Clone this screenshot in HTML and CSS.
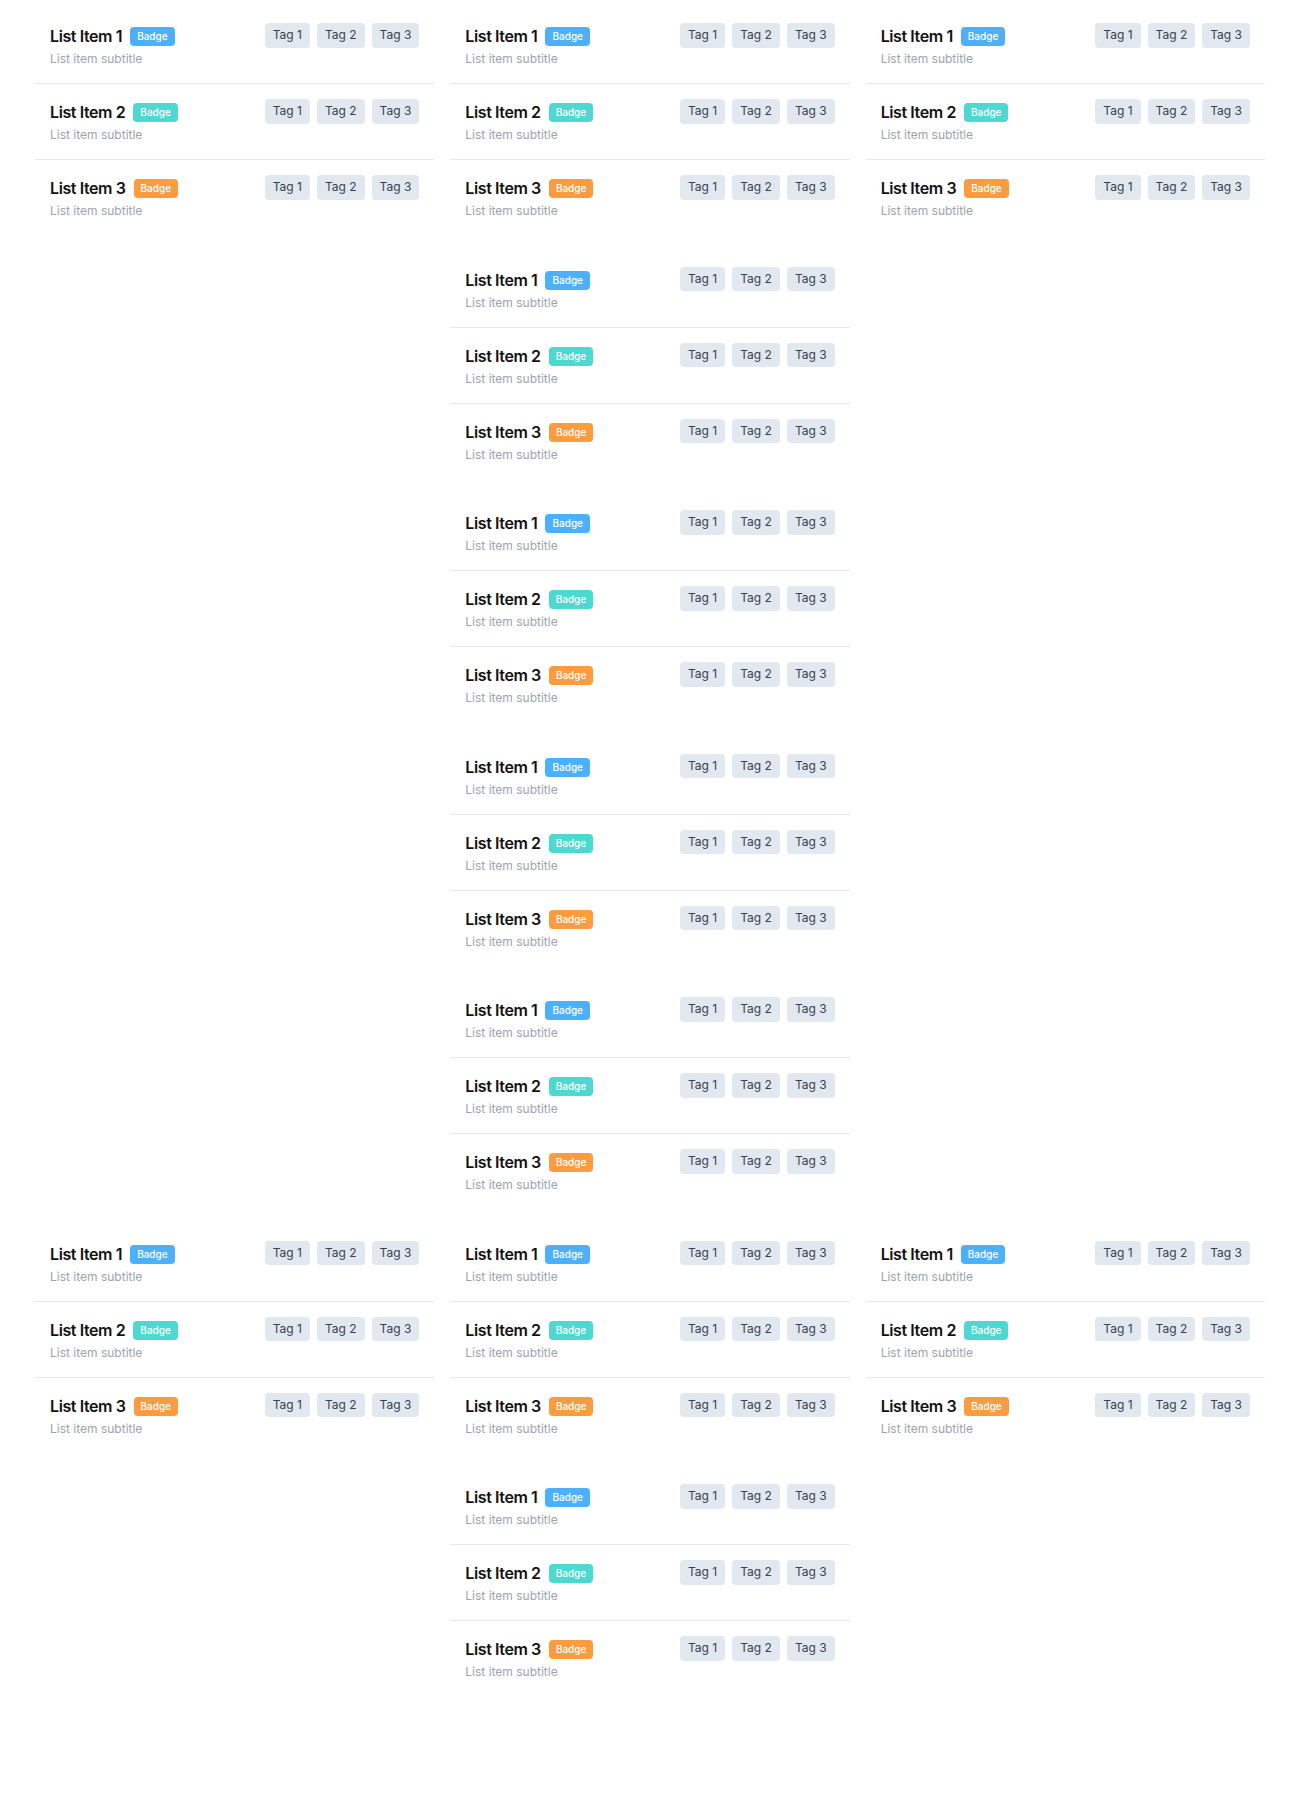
FILE: index.html
```html
<!DOCTYPE html>
<html lang="en">
<head>
<meta charset="utf-8">
<title>Lists</title>
<link rel="stylesheet" href="styles.css">
</head>
<body>
<div id="root"></div>
<script>
(function () {
  var cells = [1, 5, 1, 1, 2, 1];
  var badges = ['badge-blue', 'badge-teal', 'badge-orange'];
  var grid = document.createElement('div');
  grid.className = 'grid';
  cells.forEach(function (n) {
    var cell = document.createElement('div');
    cell.className = 'cell';
    for (var g = 0; g < n; g++) {
      var list = document.createElement('ul');
      list.className = 'list';
      for (var i = 0; i < 3; i++) {
        var li = document.createElement('li');
        li.className = 'item';
        li.innerHTML =
          '<div class="item-main">' +
            '<div class="item-head">' +
              '<span class="item-title">List Item ' + (i + 1) + '</span>' +
              '<span class="badge ' + badges[i] + '">Badge</span>' +
            '</div>' +
            '<div class="item-sub">List item subtitle</div>' +
          '</div>' +
          '<div class="tags">' +
            '<span class="tag">Tag 1</span>' +
            '<span class="tag">Tag 2</span>' +
            '<span class="tag">Tag 3</span>' +
          '</div>';
        list.appendChild(li);
      }
      cell.appendChild(list);
    }
    grid.appendChild(cell);
  });
  document.getElementById('root').appendChild(grid);
})();
</script>
</body>
</html>
```
FILE: styles.css
```css
* { box-sizing: border-box; }
body {
  margin: 8px;
  background: #ffffff;
  font-family: Inter, "Noto Sans", "Liberation Sans", sans-serif;
  color: #111827;
}
.grid {
  width: 1230px;
  margin: 0 auto;
  display: grid;
  grid-template-columns: repeat(3, 1fr);
  gap: 16px;
  align-items: start;
}
.cell {
  display: flex;
  flex-direction: column;
  gap: 16px;
}
.list {
  list-style: none;
  margin: 0;
  padding: 0;
}
.item {
  display: flex;
  justify-content: space-between;
  align-items: flex-start;
  padding: 15px;
  border-bottom: 1px solid #e5e7eb;
}
.item:last-child { border-bottom: none; }
.item-head {
  display: flex;
  align-items: center;
  gap: 8px;
}
.item-title {
  font-size: 16px;
  line-height: 27px;
  font-weight: 600;
  letter-spacing: -0.025em;
  color: #111111;
}
.badge {
  font-size: 10px;
  line-height: 15px;
  font-weight: 500;
  color: #ffffff;
  padding: 2px 7px;
  border-radius: 4px;
}
.badge-blue { background: #4cb0fd; }
.badge-teal { background: #4dd8d1; }
.badge-orange { background: #fd9c3f; }
.item-sub {
  font-size: 12px;
  line-height: 18.17px;
  color: #9ca3af;
}
.tags {
  display: flex;
  gap: 7px;
}
.tag {
  font-size: 12px;
  line-height: 16.5px;
  padding: 4px 8px;
  border-radius: 4px;
  background: #e2e8f0;
  color: #374151;
}
```
